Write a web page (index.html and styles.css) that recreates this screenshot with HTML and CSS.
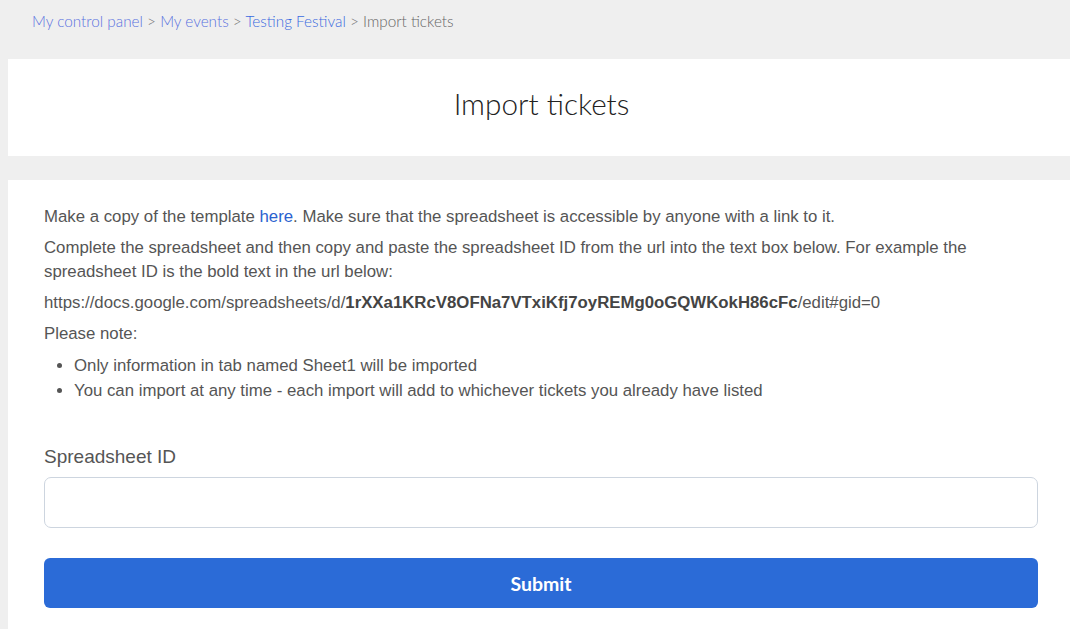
FILE: index.html
```html
<!DOCTYPE html>
<html>
<head>
<meta charset="utf-8">
<link rel="stylesheet" href="styles.css">
</head>
<body>
<nav class="crumbs">
  <a class="visited" href="#">My control panel</a> &gt;
  <a class="visited" href="#">My events</a> &gt;
  <a href="#">Testing Festival</a> &gt;
  <span>Import tickets</span>
</nav>
<header class="card head">
  <h1>Import tickets</h1>
</header>
<main class="card body">
  <p>Make a copy of the template <a href="#">here</a>. Make sure that the spreadsheet is accessible by anyone with a link to it.</p>
  <p>Complete the spreadsheet and then copy and paste the spreadsheet ID from the url into the text box below. For example the spreadsheet ID is the bold text in the url below:</p>
  <p>https://docs.google.com/spreadsheets/d/<b>1rXXa1KRcV8OFNa7VTxiKfj7oyREMg0oGQWKokH86cFc</b>/edit#gid=0</p>
  <p>Please note:</p>
  <ul>
    <li>Only information in tab named Sheet1 will be imported</li>
    <li>You can import at any time - each import will add to whichever tickets you already have listed</li>
  </ul>
  <form class="form">
    <label class="label" for="sid">Spreadsheet ID</label>
    <input class="input" id="sid" type="text">
    <button class="submit" type="button">Submit</button>
  </form>
</main>
</body>
</html>
```
FILE: styles.css
```css
html, body {
  margin: 0;
  padding: 0;
  background: #efefef;
}
body {
  font-family: "Liberation Sans", Arial, sans-serif;
  color: #555;
  overflow: hidden;
}
.crumbs {
  font-family: Lato, "Liberation Sans", sans-serif;
  font-weight: 300;
  font-size: 15.3px;
  color: #777;
  padding: 11px 0 0 32px;
  height: 48px;
  box-sizing: border-box;
  line-height: 20px;
}
.crumbs a {
  color: #3a6ae0;
  text-decoration: none;
}
.crumbs a.visited {
  color: #5a72e0;
}
.crumbs span {
  color: #666;
}
.card {
  background: #fff;
  margin-left: 8px;
}
.head {
  height: 97px;
  display: flex;
  align-items: center;
  justify-content: center;
  margin-top: 11px;
  margin-bottom: 24px;
}
.head h1 {
  margin: 0;
  font-family: Lato, "Liberation Sans", sans-serif;
  font-weight: 300;
  font-size: 29.7px;
  color: #222;
  padding-left: 5px;
  padding-bottom: 8px;
}
.body {
  padding: 25px 32px 40px 36px;
  font-size: 16.8px;
  line-height: 24px;
}
.body p {
  margin: 0 0 7px;
}
.body a {
  color: #2a62cf;
  text-decoration: none;
}
.body b {
  color: #444;
}
.body ul {
  margin: 0;
  padding-left: 30px;
}
.body li {
  line-height: 25px;
}
.form {
  display: flex;
  flex-direction: column;
  margin-top: 43px;
}
.label {
  font-size: 19px;
  line-height: 22px;
  color: #555;
  margin-bottom: 9px;
}
.input {
  height: 51px;
  box-sizing: border-box;
  border: 1px solid #cdd5df;
  border-radius: 7px;
  font-size: 16px;
  padding: 0 12px;
  margin: 0;
}
.submit {
  margin-top: 30px;
  height: 50px;
  border: none;
  border-radius: 6px;
  background: #2b6bd7;
  color: #fff;
  font-family: Lato, "Liberation Sans", sans-serif;
  font-weight: 700;
  font-size: 19.5px;
}
```
